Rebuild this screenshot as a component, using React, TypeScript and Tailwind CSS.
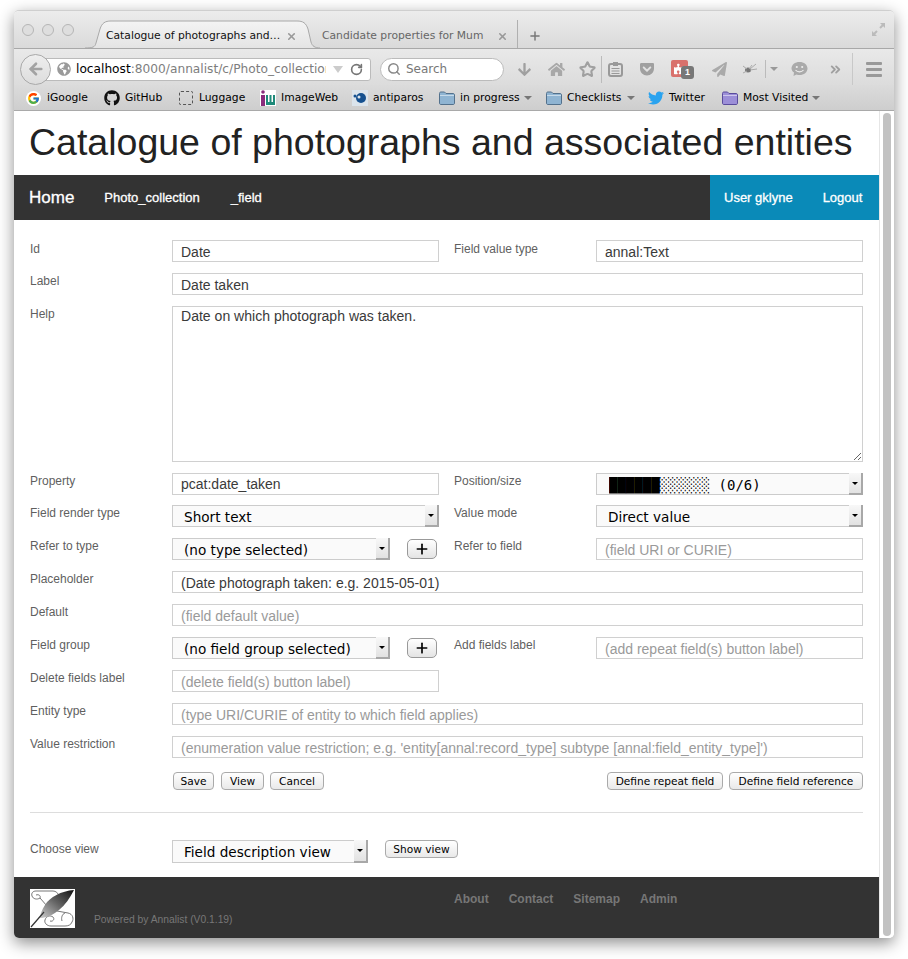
import { ArrowLeft, RotateCw, Search, Star, Plus, X, ChevronsRight } from "lucide-react";
import { FaGithub, FaTwitter, FaGlobeAmericas, FaArrowDown, FaHome, FaGetPocket, FaPuzzlePiece, FaPaperPlane } from "react-icons/fa";
import { FcGoogle } from "react-icons/fc";

const uiFont = "font-['DejaVu_Sans',sans-serif]";

function Caret({ className = "" }: { className?: string }) {
  return <span className={`inline-block w-0 h-0 border-x-[4px] border-x-transparent border-t-[4px] border-t-[#777] ${className}`} />;
}

function Folder({ color = "#8fb4d2", dark = "#53718c" }: { color?: string; dark?: string }) {
  return (
    <svg width="16" height="14" viewBox="0 0 16 14" className="shrink-0">
      <path d="M.5 2.500C.5 1.500 1 1 2 1h3.500l1.500 1.500h7c1 0 1.500.5 1.500 1.500v8c0 1-.5 1.500-1.500 1.500H2c-1 0-1.500-.5-1.500-1.500z" fill={color} stroke={dark} />
      <path d="M1 4.500h14" stroke="#fff" strokeOpacity=".5" />
    </svg>
  );
}

function TabShape() {
  return (
    <svg width="235" height="29" viewBox="0 0 235 29" className="absolute left-0 top-0" fill="none">
      <defs>
        <linearGradient id="tab" x1="0" y1="0" x2="0" y2="1">
          <stop offset="0" stopColor="#f4f4f4" />
          <stop offset="1" stopColor="#e4e4e4" />
        </linearGradient>
      </defs>
      <path d="M0 28c8 0 10-1 11-5l4-14c2-6 5-8 11-8h186c6 0 9 2 11 8l3 13c1 4 4 6 9 6" fill="url(#tab)" stroke="#a8a8a8" />
    </svg>
  );
}

function Logo() {
  return (
    <svg width="45" height="39" viewBox="0 0 45 39" className="shrink-0 bg-white">
      <defs>
        <linearGradient id="quill" x1="0" y1="1" x2="1" y2="0">
          <stop offset="0" stopColor="#ccc" />
          <stop offset=".5" stopColor="#666" />
          <stop offset="1" stopColor="#111" />
        </linearGradient>
      </defs>
      <path d="M6 2h17c3 0 5 2 6 5l2 6M6 2C3 2 1 4 2 7c1 3 5 4 8 2 1-2-1-4-4-3M10 9l7 8" fill="#fff" stroke="#777" />
      <path d="M27 22l11 2c5 1 6 6 4 9-1 3-4 4-7 4H21c-4 0-7-3-6-6 1-4 5-5 8-3 2 2 0 5-3 4M35 24c-3 1-4 5-3 8" fill="#fff" stroke="#777" />
      <path d="M44 1C31 2 20 8 15 16c-3 5-5 9-5 13 5 0 12-2 19-8 6-5 11-12 15-20z" fill="url(#quill)" />
      <path d="M1 38L14 23" stroke="#333" strokeWidth="1.200" />
    </svg>
  );
}

function ToolBar() {
  return (
    <div className="relative flex items-center h-[36px] pt-[4px] bg-gradient-to-b from-[#e9e9e9] to-[#dcdcdc] pl-[6px]">
      <div className="z-10 flex items-center justify-center w-[31px] h-[31px] rounded-full bg-gradient-to-b from-[#eee] to-[#ddd] border border-[#a9a9a9] shrink-0">
        <ArrowLeft size={18} strokeWidth={3.500} className="text-[#a3a3a3]" />
      </div>
      <div className="flex items-center h-[23px] w-[326px] -ml-[6px] bg-white border border-[#bbb] rounded-r-[3px] pl-[11px] pr-[7px] shrink-0">
        <FaGlobeAmericas size={14} className="text-[#9a9a9a] shrink-0" />
        <span className={`ml-[5px] text-[12.200px] text-[#7d7d7d] w-[250px] overflow-hidden whitespace-nowrap ${uiFont}`}>
          <span className="text-black">localhost</span>:8000/annalist/c/Photo_collection
        </span>
        <span className="ml-[7px] w-0 h-0 border-x-[5px] border-x-transparent border-t-[7px] border-t-[#ccc]" />
        <RotateCw size={13} strokeWidth={3} className="ml-[7px] text-[#777]" />
      </div>
      <div className="flex items-center h-[23px] w-[124px] ml-[9px] bg-white border border-[#bbb] rounded-full pl-[6px] shrink-0">
        <Search size={14} strokeWidth={2.500} className="text-[#888]" />
        <span className={`ml-[5px] text-[12px] text-[#777] ${uiFont}`}>Search</span>
      </div>
      <div className="flex items-center text-[#a0a0a0]">
        <FaArrowDown size={15} className="ml-[13px]" />
        <FaHome size={17} className="ml-[16px] text-[#a8a8a8]" />
        <Star size={17} strokeWidth={3} className="ml-[14px]" />
        <span className="ml-[5px] w-px h-[27px] bg-[#bbb]" />
        <svg width="15" height="16" viewBox="0 0 15 16" className="ml-[6px]">
          <rect x="1" y="3" width="13" height="12" rx="2" fill="none" stroke="#999" strokeWidth="2" />
          <rect x="5" y="1" width="5" height="4" fill="#999" />
          <path d="M3.500 7.500h8M3.500 10h8M3.500 12.500h8" stroke="#999" />
        </svg>
        <FaGetPocket size={16} className="ml-[16px]" />
        <span className="relative ml-[16px] w-[24px] h-[18px]">
          <span className="flex items-center justify-center w-[17px] h-[17px] rounded-[2px] bg-[#d9716c]">
            <FaPuzzlePiece size={12} className="text-white" />
          </span>
          <span className="absolute right-[1px] bottom-[-1px] flex items-center justify-center w-[13px] h-[13px] rounded-[3px] bg-[#777] text-[9px] font-bold text-white">1</span>
        </span>
        <FaPaperPlane size={15} className="ml-[17px] text-[#aaa]" />
        <svg width="16" height="12" viewBox="0 0 16 12" className="ml-[15px]">
          <ellipse cx="6" cy="7" rx="3" ry="2.500" fill="#777" />
          <path d="M1 3l4 3M1 10l4-2M10 2L7 6M14 1L8 6M15 6L8 7" stroke="#aaa" />
        </svg>
        <span className="ml-[7px] w-px h-[18px] bg-[#bbb]" />
        <Caret className="ml-[4px] !border-t-[#999]" />
        <svg width="17" height="16" viewBox="0 0 17 16" className="ml-[13px]">
          <path d="M8.500 1C13 1 16.500 3.700 16.500 7.500S13 14 8.500 14c-1 0-2 0-3-.5L2.500 15l.5-3.500C1.500 10.500.5 9 .5 7.500.5 3.700 4 1 8.500 1z" fill="#aaa" />
          <circle cx="5.800" cy="6" r="1.100" fill="#eee" />
          <circle cx="11.200" cy="6" r="1.100" fill="#eee" />
          <path d="M4.500 9c2 2.500 6 2.500 8 0" stroke="#eee" strokeWidth="1.200" fill="none" />
        </svg>
        <ChevronsRight size={15} strokeWidth={3} className="ml-[20px]" />
        <span className="ml-[9px] w-px h-[32px] bg-[#c8c8c8]" />
        <span className="ml-[13px] flex flex-col gap-[3px]">
          <span className="block w-[16px] h-[3px] rounded-[1px] bg-[#999]" />
          <span className="block w-[16px] h-[3px] rounded-[1px] bg-[#999]" />
          <span className="block w-[16px] h-[3px] rounded-[1px] bg-[#999]" />
        </span>
      </div>
    </div>
  );
}

function BookmarkBar() {
  return (
    <div className={`flex items-center h-[26px] pt-[1px] bg-gradient-to-b from-[#dbdbdb] to-[#cecece] border-b border-[#a9a9a9] text-[10.750px] text-black whitespace-nowrap ${uiFont}`}>
      <span className="ml-[12px] flex items-center justify-center w-[15px] h-[15px] rounded-full bg-white"><FcGoogle size={13} /></span>
      <span className="ml-[6px] w-[51px]">iGoogle</span>
      <FaGithub size={16} className="ml-[6px] text-[#111]" />
      <span className="ml-[5px] w-[49px]">GitHub</span>
      <span className="ml-[5px] w-[14px] h-[14px] rounded-[2px] border border-dashed border-[#555]" />
      <span className="ml-[6px] w-[55px]">Luggage</span>
      <svg width="16" height="16" viewBox="0 0 16 16" className="ml-[6px]">
        <rect width="16" height="16" fill="#fff" />
        <rect x="1" y="5" width="4" height="11" fill="#8a2d7d" />
        <circle cx="3" cy="2" r="1.800" fill="#8a2d7d" />
        <path d="M6 5v10h9V5h-2v7h-1.500V5h-2v7H8V5z" fill="#1f8a7a" />
      </svg>
      <span className="ml-[5px] w-[66px]">ImageWeb</span>
      <svg width="16" height="16" viewBox="0 0 16 16" className="ml-[5px]">
        <rect width="16" height="16" fill="#dbe4ec" />
        <circle cx="9" cy="8" r="5" fill="#15508f" />
        <circle cx="3" cy="6" r="1.500" fill="#15508f" />
        <circle cx="7" cy="7" r="1.500" fill="#dbe4ec" />
      </svg>
      <span className="ml-[5px] w-[62px]">antiparos</span>
      <span className="ml-[4px]"><Folder /></span>
      <span className="ml-[5px] w-[60px]">in progress</span>
      <Caret className="ml-[4px]" />
      <span className="ml-[14px]"><Folder /></span>
      <span className="ml-[5px] w-[56px]">Checklists</span>
      <Caret className="ml-[4px]" />
      <FaTwitter size={16} className="ml-[13px] text-[#2aa3ef]" />
      <span className="ml-[5px] w-[40px]">Twitter</span>
      <span className="ml-[13px]"><Folder color="#9c8fd8" dark="#5a4c9c" /></span>
      <span className="ml-[5px] w-[66px]">Most Visited</span>
      <Caret className="ml-[3px]" />
    </div>
  );
}

function Label({ children, className = "w-[142px]" }: { children: string; className?: string }) {
  return <label className={`shrink-0 pt-[1px] text-[12px] leading-[14px] text-[#5f5f5f] ${className}`}>{children}</label>;
}

function Input({ value, placeholder, className = "flex-1" }: { value?: string; placeholder?: string; className?: string }) {
  return (
    <input
      readOnly
      value={value ?? ""}
      placeholder={placeholder}
      className={`min-w-0 h-[22px] px-[8px] pt-[2px] border-[1.500px] border-[#d0d0d0] bg-white text-[14px] text-[#3a3a3a] placeholder:text-[#9a9a9a] outline-none ${className}`}
    />
  );
}

function Select({ value, className = "w-[267px]", font = uiFont, pad = "pl-[11px]", height = "h-[22px]", size = "text-[13.600px]" }: { value: string; className?: string; font?: string; pad?: string; height?: string; size?: string }) {
  return (
    <div className={`relative shrink-0 ${height} ${className}`}>
      <select
        defaultValue={value}
        className={`appearance-none block w-full h-full pt-[1px] border border-[#ccc] bg-[#fafafa] text-black outline-none rounded-none ${pad} ${size} ${font}`}
      >
        <option>{value}</option>
      </select>
      <span className="absolute right-0 top-0 bottom-0 w-[14px] flex items-center justify-center bg-gradient-to-b from-[#f8f8f8] to-[#e2e2e2] border-r-2 border-b-2 border-[#a8a8a8]">
        <span className="w-0 h-0 border-x-[3px] border-x-transparent border-t-[3px] border-t-black" />
      </span>
    </div>
  );
}

function Btn({ children, className = "" }: { children: React.ReactNode; className?: string }) {
  return (
    <button className={`h-[18px] rounded-[4px] border border-[#aaa] bg-gradient-to-b from-white to-[#e9e9e9] text-[10.600px] leading-none text-black whitespace-nowrap ${uiFont} ${className}`}>
      {children}
    </button>
  );
}

function PlusBtn() {
  return (
    <button className="ml-[17px] mt-px w-[30px] h-[20px] flex items-center justify-center rounded-[5px] border border-[#999] bg-gradient-to-b from-white to-[#e4e4e4]">
      <Plus size={16} strokeWidth={2.500} className="text-black" />
    </button>
  );
}

function Row({ children, className = "mt-[11px]" }: { children: React.ReactNode; className?: string }) {
  return <div className={`flex ${className}`}>{children}</div>;
}

const gapCol = "w-[142px] ml-[15px]";

export default function App() {
  return (
    <div className="w-[908px] h-[959px] bg-white pl-[14px] pt-[10px] overflow-hidden font-['Liberation_Sans',sans-serif]">
      <div className="w-[880px] h-[928px] flex flex-col rounded-[5px] overflow-hidden bg-white border-t border-[#cfcfcf] shadow-[0_5px_16px_rgba(0,0,0,0.45)]">
        {/* browser chrome */}
        <div className={`relative flex items-center h-[38px] bg-gradient-to-b from-[#ececec] to-[#dadada] border-b border-[#a8a8a8] ${uiFont}`}>
          <span className="ml-[8px] w-[12px] h-[12px] rounded-full bg-[#dedede] border border-[#b5b5b5]" />
          <span className="ml-[8px] w-[12px] h-[12px] rounded-full bg-[#dedede] border border-[#b5b5b5]" />
          <span className="ml-[8px] w-[12px] h-[12px] rounded-full bg-[#dedede] border border-[#b5b5b5]" />
          <div className="relative ml-[11px] -mb-[1px] self-end w-[235px] h-[29px] shrink-0 flex items-center">
            <TabShape />
            <span className="relative ml-[21px] mt-[3px] text-[10.750px] text-[#111] whitespace-nowrap w-[176px]">Catalogue of photographs and…</span>
            <X size={11} strokeWidth={3.500} className="relative mt-[3px] ml-[4px] text-[#999]" />
          </div>
          <span className="ml-[2px] pt-[13px] text-[10.750px] text-[#666] whitespace-nowrap w-[161px]">Candidate properties for Mum</span>
          <X size={11} strokeWidth={3.500} className="mt-[13px] ml-[14px] text-[#999]" />
          <span className="ml-[9px] self-end w-px h-[28px] bg-[#b0b0b0]" />
          <Plus size={14} strokeWidth={2.500} className="mt-[13px] ml-[10px] text-[#777]" />
          <svg width="15" height="15" viewBox="0 0 15 15" className="ml-auto mr-[8px] mt-[-1px]">
            <path d="M9 1h5v5zM6 14H1V9z" fill="#bbb" />
            <path d="M9 6l3-3M6 9l-3 3" stroke="#bbb" strokeWidth="2" />
          </svg>
        </div>
        <ToolBar />
        <BookmarkBar />

        <div className="flex flex-1 min-h-0">
          {/* page */}
          <div className="w-[865px] flex flex-col">
            <h1 className="h-[64px] pl-[15px] text-[37.500px] leading-[63px] text-[#222] whitespace-nowrap">Catalogue of photographs and associated entities</h1>
            <nav className="flex items-center h-[45px] pt-[1px] bg-[#333] text-white [-webkit-text-stroke:0.3px_#fff]">
              <a className="ml-[15px] text-[17px]">Home</a>
              <a className="ml-[30px] text-[13px]">Photo_collection</a>
              <a className="ml-[31px] text-[13px]">_field</a>
              <div className="ml-auto -mt-[1px] flex items-center h-[45px] w-[169px] pl-[14px] bg-[#0a8ab8] text-[13px]">
                <a className="pt-[1px]">User gklyne</a>
                <a className="ml-[30px] pt-[1px]">Logout</a>
              </div>
            </nav>

            <form className="flex-1 flex flex-col px-[16px] pt-[20px]">
              <Row className="mt-0">
                <Label className="w-[142px] !pt-[2px]">Id</Label>
                <Input value="Date" className="w-[267px]" />
                <Label className={`${gapCol} !pt-[2px]`}>Field value type</Label>
                <Input value="annal:Text" className="w-[267px]" />
              </Row>
              <Row>
                <Label>Label</Label>
                <Input value="Date taken" />
              </Row>
              <Row>
                <Label>Help</Label>
                <textarea
                  readOnly
                  defaultValue="Date on which photograph was taken."
                  className="flex-1 h-[156px] px-[8px] pt-[1px] border-[1.500px] border-[#d0d0d0] text-[14.050px] leading-[17px] text-[#3a3a3a] outline-none resize-y"
                />
              </Row>
              <Row>
                <Label>Property</Label>
                <Input value="pcat:date_taken" className="w-[267px] !pt-0" />
                <Label className={gapCol}>Position/size</Label>
                <Select value="██████░░░░░░ (0/6)" font="font-['DejaVu_Sans_Mono',monospace]" pad="pl-[12px]" size="text-[14px]" />
              </Row>
              <Row className="mt-[10px]">
                <Label>Field render type</Label>
                <Select value="Short text" />
                <Label className={gapCol}>Value mode</Label>
                <Select value="Direct value" />
              </Row>
              <Row>
                <Label>Refer to type</Label>
                <Select value="(no type selected)" className="w-[218px]" />
                <PlusBtn />
                <Label className={`${gapCol} !ml-[17px]`}>Refer to field</Label>
                <Input placeholder="(field URI or CURIE)" className="w-[267px]" />
              </Row>
              <Row>
                <Label>Placeholder</Label>
                <Input value="(Date photograph taken: e.g. 2015-05-01)" />
              </Row>
              <Row>
                <Label>Default</Label>
                <Input placeholder="(field default value)" />
              </Row>
              <Row>
                <Label>Field group</Label>
                <Select value="(no field group selected)" className="w-[218px]" />
                <PlusBtn />
                <Label className={`${gapCol} !ml-[17px]`}>Add fields label</Label>
                <Input placeholder="(add repeat field(s) button label)" className="w-[267px]" />
              </Row>
              <Row>
                <Label>Delete fields label</Label>
                <Input placeholder="(delete field(s) button label)" className="w-[267px]" />
              </Row>
              <Row>
                <Label>Entity type</Label>
                <Input placeholder="(type URI/CURIE of entity to which field applies)" />
              </Row>
              <Row>
                <Label>Value restriction</Label>
                <Input placeholder="(enumeration value restriction; e.g. 'entity[annal:record_type] subtype [annal:field_entity_type]')" />
              </Row>

              <div className="flex mt-[14px] pl-[143px]">
                <Btn className="w-[41px]">Save</Btn>
                <Btn className="w-[43px] ml-[7px]">View</Btn>
                <Btn className="w-[54px] ml-[6px]">Cancel</Btn>
                <Btn className="w-[116px] ml-auto">Define repeat field</Btn>
                <Btn className="w-[134px] ml-[6px]">Define field reference</Btn>
              </div>

              <hr className="mt-[22px] border-[#ddd]" />

              <div className="flex mt-[27px]">
                <Label className="w-[142px] !pt-[2px]">Choose view</Label>
                <Select value="Field description view" className="w-[196px]" height="h-[23px]" />
                <Btn className="w-[73px] ml-[17px]">Show view</Btn>
              </div>
            </form>

            <footer className="relative h-[61px] flex bg-[#333] pl-[16px]">
              <div className="pt-[12px]"><Logo /></div>
              <span className="self-end mb-[11px] ml-[19px] text-[10.300px] text-[#777] whitespace-nowrap">Powered by Annalist (V0.1.19)</span>
              <div className="absolute left-[440px] top-[13px] flex gap-[20px] text-[12px] font-bold text-[#777]">
                <a>About</a>
                <a>Contact</a>
                <a>Sitemap</a>
                <a>Admin</a>
              </div>
            </footer>
          </div>

          {/* scrollbar */}
          <div className="w-[15px] bg-white pl-[3px] pr-[3px] py-[2px] border-l border-[#e6e6e6]">
            <div className="h-full w-[8px] rounded-full bg-[#c2c2c2]" />
          </div>
        </div>
      </div>
    </div>
  );
}
